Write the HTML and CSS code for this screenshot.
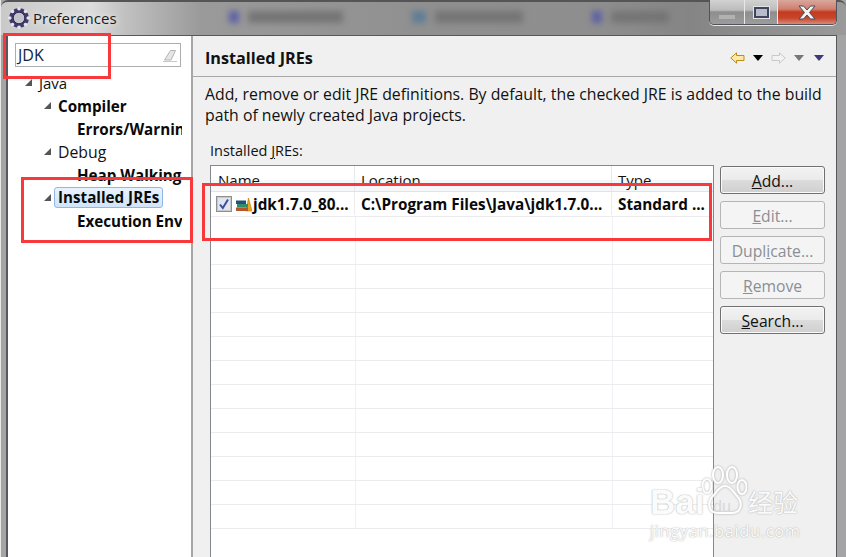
FILE: index.html
```html
<!DOCTYPE html>
<html lang="en">
<head>
<meta charset="utf-8">
<title>Preferences</title>
<link rel="stylesheet" href="styles.css">
</head>
<body>
<div class="window">
  <header class="titlebar">
    <svg class="app-icon" width="24" height="24" viewBox="0 0 24 24">
      <circle cx="12" cy="12" r="10" fill="#3f3a6b"/>
      <g fill="#e4e4ea">
        <circle cx="12" cy="2.800" r="1.800"/><circle cx="12" cy="21.200" r="1.800"/><circle cx="2.800" cy="12" r="1.800"/><circle cx="21.200" cy="12" r="1.800"/>
        <circle cx="5.500" cy="5.500" r="1.800"/><circle cx="18.500" cy="5.500" r="1.800"/><circle cx="5.500" cy="18.500" r="1.800"/><circle cx="18.500" cy="18.500" r="1.800"/>
      </g>
      <circle cx="12" cy="12" r="5.800" fill="#c4c3cc" stroke="#2f2c55" stroke-width="1"/>
    </svg>
    <span class="title-text">Preferences</span>
    <div class="blur-strip">
      <i class="blot blot-blue"></i><i class="blot blot-long"></i>
      <i class="blot blot-teal"></i><i class="blot blot-mid"></i>
      <i class="blot blot-blue blot-far"></i><i class="blot blot-short"></i>
    </div>
    <div class="win-buttons">
      <div class="win-btn btn-min"><span class="min-bar"></span></div>
      <div class="win-btn btn-max"><span class="max-box"></span></div>
      <div class="win-btn btn-close">
        <svg width="18" height="15" viewBox="3 1 18 14"><path d="M4 1.500h4.500L12 5.500l3.500-4H20l-5.500 6.500L20 14.500h-4.500L12 10.500l-3.500 4H4l5.500-6.500z" fill="#f2f2f2" stroke="#4a4a55" stroke-width="1"/></svg>
      </div>
    </div>
  </header>

  <div class="client">
    <aside class="sidebar">
      <div class="search">
        <span>JDK</span>
        <svg width="14" height="14" viewBox="0 0 14 14"><path d="M1.500 12 7.500 2.500h5L8 12z" fill="#e6e6e6" stroke="#b4b4b4"/><path d="M0 13.500h14" stroke="#c8c8c8"/></svg>
      </div>
      <ul class="tree">
        <li class="node lvl0 java"><i class="twist"></i><span>Java</span></li>
        <li class="node lvl1 bold"><i class="twist"></i><span>Compiler</span></li>
        <li class="node lvl2 bold"><span>Errors/Warnings</span></li>
        <li class="node lvl1"><i class="twist"></i><span>Debug</span></li>
        <li class="node lvl2 bold"><span>Heap Walking</span></li>
        <li class="node lvl1 bold"><i class="twist"></i><span class="selected">Installed JREs</span></li>
        <li class="node lvl2 bold"><span>Execution Environments</span></li>
      </ul>
    </aside>

    <main class="content">
      <div class="content-head">
        <h1>Installed JREs</h1>
        <div class="nav">
          <svg width="15" height="12" viewBox="0 0 15 12"><path d="M.8 6 6.500.8v2.700h7.500v5H6.500v2.700z" fill="#fde9a8" stroke="#c08a18"/></svg>
          <i class="tri tri-black"></i>
          <svg class="nav-fwd" width="15" height="12" viewBox="0 0 15 12"><path d="M14.200 6 8.500.8v2.700H1v5h7.500v2.700z" fill="#f2f2f2" stroke="#c8c8c8"/></svg>
          <i class="tri tri-grey"></i>
          <i class="tri tri-navy"></i>
        </div>
      </div>
      <div class="content-body">
        <p class="desc">Add, remove or edit JRE definitions. By default, the checked JRE is added to the build path of newly created Java projects.</p>
        <div class="label">Installed <u>J</u>REs:</div>
        <div class="table-area">
          <div class="table">
            <div class="thead">
              <div class="c1">Name</div><div class="c2">Location</div><div class="c3">Type</div>
            </div>
            <div class="row first">
              <div class="c1 name-cell">
                <span class="check"><svg width="12" height="12" viewBox="0 0 12 12"><path d="M2 6.500 4.800 10 10 1.500" fill="none" stroke="#3c4f9c" stroke-width="2"/></svg></span>
                <svg class="jre-icon" width="16" height="15" viewBox="0 0 16 15">
                  <path d="M12.500 1 16 14h-6z" fill="#e9a820" stroke="#b67a10" stroke-width=".6"/>
                  <rect x="0" y="10.500" width="12" height="3.500" fill="#b5562a"/>
                  <rect x="1" y="7" width="11" height="3.500" fill="#2f8f6a"/>
                  <rect x="0" y="3.500" width="10" height="3.500" fill="#23507e"/>
                </svg>
                <span>jdk1.7.0_80...</span>
              </div>
              <div class="c2">C:\Program Files\Java\jdk1.7.0...</div>
              <div class="c3">Standard ...</div>
            </div>
            <div class="row"></div><div class="row"></div><div class="row"></div><div class="row"></div>
            <div class="row"></div><div class="row"></div><div class="row"></div><div class="row"></div>
            <div class="row"></div><div class="row"></div><div class="row"></div><div class="row"></div><div class="row"></div>
          </div>
          <div class="actions">
            <button class="btn active"><u>A</u>dd...</button>
            <button class="btn" disabled><u>E</u>dit...</button>
            <button class="btn" disabled>Dupl<u>i</u>cate...</button>
            <button class="btn" disabled><u>R</u>emove</button>
            <button class="btn active"><u>S</u>earch...</button>
          </div>
        </div>
      </div>
    </main>
  </div>

  <div class="mark mark-search"></div>
  <div class="mark mark-tree"></div>
  <div class="mark mark-row"></div>

  <div class="watermark">
    <svg class="paw" width="46" height="52" viewBox="0 0 46 52">
      <g fill="none" stroke="#fff" stroke-width="2">
        <ellipse cx="6" cy="20" rx="4.500" ry="7"/><ellipse cx="17" cy="9" rx="5" ry="8"/>
        <ellipse cx="31" cy="9" rx="5" ry="8"/><ellipse cx="41" cy="21" rx="4.500" ry="7"/>
        <path d="M24 20c-6 0-8 6-12 10-6 6-5 17 5 17h14c10 0 11-11 5-17-4-4-6-10-12-10z"/>
      </g>
    </svg>
    <span class="wm-bai">Bai</span>
    <span class="wm-du">du</span>
    <span class="wm-cn">经验</span>
    <span class="wm-url">jingyan.baidu.com</span>
  </div>
</div>
</body>
</html>
```

FILE: styles.css
```css
* { box-sizing: border-box; }
html, body { margin: 0; padding: 0; }
body { width: 846px; height: 557px; overflow: hidden; font-family: "Open Sans", "Noto Sans", sans-serif; color: #111; }

.window {
  position: relative;
  width: 846px;
  height: 557px;
  display: flex;
  flex-direction: column;
  overflow: hidden;
  background: #a4a4a4;
  border-left: 1px solid #e8e8e8;
}

.titlebar {
  flex: none;
  height: 35px;
  display: flex;
  align-items: center;
  padding-left: 6px;
  border-top: 2px solid #555;
  border-radius: 7px 7px 0 0;
  background: linear-gradient(90deg, #c9c9c9 0, #dcdcdc 90px, #c0c0c0 125px, #9a9a9a 200px, #8f8f8f 440px, #8e8e8e 600px, #858585 690px, #9a9a9a 846px);
}
.app-icon { flex: none; margin-top: -1px; }
.title-text { margin-left: 2px; margin-top: -1px; font-size: 15px; color: #1a1a1a; text-shadow: 0 0 6px #fff; }
.blur-strip { flex: 1; display: flex; align-items: center; gap: 9px; padding-left: 112px; filter: blur(3px); margin-top: -4px; }
.blot { display: block; height: 12px; background: #757575; }
.blot-blue { width: 10px; background: #5d5fa5; }
.blot-far { margin-left: 60px; }
.blot-teal { width: 14px; background: #5e7d96; margin-left: 60px; }
.blot-long { width: 95px; }
.blot-mid { width: 88px; }
.blot-short { width: 58px; }

.win-buttons {
  flex: none;
  align-self: flex-start;
  margin: -2px 9px 0 0;
  height: 25px;
  display: flex;
  border: 1px solid #50545a;
  border-top: 0;
  border-radius: 0 0 5px 5px;
  overflow: hidden;
  box-shadow: 0 1px 0 #e6e6e6;
}
.win-btn { height: 24px; display: flex; align-items: center; justify-content: center; }
.btn-min, .btn-max { background: linear-gradient(#d2d2d2 0, #bcbcbc 42%, #8e8e8e 50%, #9c9c9c 100%); border-right: 1px solid #e8e8e8; }
.btn-min { width: 35px; padding-top: 9px; }
.btn-max { width: 33px; }
.btn-close { width: 58px; background: linear-gradient(#d9a79e 0, #cf7f6e 38%, #c23b20 50%, #c8452a 75%, #d98a78 100%); }
.min-bar { width: 16px; height: 4px; background: #b2b2b2; }
.max-box { width: 15px; height: 11px; border: 2px solid #3f4560; background: #b8bcc8; box-shadow: 0 0 0 1px #e4e4e4; }

.client {
  flex: 1;
  min-height: 0;
  display: flex;
  margin: 0 9px 0 5px;
  border: 1px solid #55585c;
  border-width: 1px 1px 0 2px;
  background: #fff;
}

.sidebar {
  flex: none;
  width: 185px;
  background: #fff;
  border-right: 2px solid #a6a6a6;
  padding: 7px 10px 0 7px;
  overflow: hidden;
}
.search {
  height: 24px;
  border: 1px solid #adadad;
  display: flex;
  align-items: center;
  justify-content: space-between;
  padding: 0 3px 0 2px;
  font-size: 16px;
  color: #10243e;
}
.tree { list-style: none; margin: 5px 0 0; padding: 0; width: 167px; overflow: hidden; }
.node { height: 23.100px; display: flex; align-items: center; white-space: nowrap; font-size: 15.800px; color: #111; }
.node.bold { font-size: 15.200px; font-weight: 700; color: #0a0a0a; }
.lvl0 { padding-left: 10px; }
.lvl1 { padding-left: 29px; }
.lvl2 { padding-left: 62px; }
.node.java { height: 21px; margin-bottom: 1px; font-size: 15px; }
.twist { flex: none; width: 0; height: 0; margin-right: 7px; border-style: solid; border-width: 0 0 7px 7px; border-color: transparent transparent #555 transparent; }
.selected { margin-left: -4px; padding: 0 3px; height: 21px; line-height: 19px; background: linear-gradient(#e9f3fd, #cfe4fb); border: 1px solid #8fb8e6; border-radius: 3px; }

.content { flex: 1; min-width: 0; background: #f0f0f0; display: flex; flex-direction: column; }
.content-head { flex: none; height: 41px; display: flex; align-items: center; justify-content: space-between; padding: 3px 12px 0 12px; border-bottom: 1px solid #a8a8a8; }
.content-head h1 { margin: 0; font-size: 16.200px; font-weight: 700; color: #111; }
.nav { display: flex; align-items: center; }
.nav-fwd { margin-left: 8px; }
.tri { display: block; width: 10px; height: 6px; margin-left: 8px; border-style: solid; border-width: 6px 5px 0 5px; border-color: transparent; }
.tri-black { border-top-color: #000; }
.tri-grey { border-top-color: #777; }
.tri-navy { border-top-color: #3c3a78; margin-left: 10px; }

.content-body { flex: 1; min-height: 0; display: flex; flex-direction: column; padding: 7px 11px 0 12px; }
.desc { margin: 0; font-size: 15.820px; line-height: 21px; width: 625px; color: #111; }
.label { margin: 15px 0 0 5px; font-size: 14.500px; line-height: 20px; color: #111; }
.label u { text-underline-offset: 2px; }

.table-area { flex: 1; min-height: 0; display: flex; gap: 6px; margin: 4px 0 0 5px; }
.table { flex: none; width: 504px; background: #fff; border: 1px solid #828790; border-bottom: 0; overflow: hidden; }
.thead { height: 26px; display: flex; background: linear-gradient(#fff 0, #fff 55%, #f6f7f8 55%, #f6f7f8 100%); border-bottom: 1px solid #e2e3e5; font-size: 15px; line-height: 29px; }
.thead > div { padding-left: 7px; border-right: 1px solid #e6e8ec; color: #111; }
.thead > .c2, .thead > .c3 { padding-left: 6px; }
.thead > .c3 { border-right: 0; }
.c1 { flex: none; width: 144px; }
.c2 { flex: none; width: 257px; }
.c3 { flex: none; width: 101px; }
.row { height: 24px; display: flex; border-bottom: 1px solid #ececef; font-size: 15.300px; font-weight: 700; line-height: 24px; white-space: nowrap; color: #0a0a0a; }
.row > div { height: 23px; }
.row.first { height: 25px; }
.row > .c1 { display: flex; align-items: center; padding: 1px 0 0 5px; }
.row > .c2, .row > .c3 { padding-left: 6px; }
.row > .c1, .row > .c2 { border-right: 1px solid #ececef; }
.row:not(.first) { background: linear-gradient(90deg, transparent 144px, #eef0f5 144px, #eef0f5 145px, transparent 145px, transparent 401px, #eef0f5 401px, #eef0f5 402px, transparent 402px); }
.check { flex: none; width: 16px; height: 16px; display: flex; align-items: center; justify-content: center; border: 1px solid #8e8f8f; background: #e1e5f0; box-shadow: inset 0 0 0 1px #c9c9c9; }
.jre-icon { flex: none; margin-left: 4px; margin-right: 1px; }

.actions { flex: none; width: 105px; display: flex; flex-direction: column; gap: 7px; margin-top: 1px; }
.btn { height: 28px; padding: 2px 0 0; font: 15.700px "Open Sans", "Noto Sans", sans-serif; border-radius: 3px; border: 1px solid #707070; color: #111; background: linear-gradient(#f2f2f2 0, #ebebeb 49%, #dcdcdc 50%, #cfcfcf 100%); box-shadow: inset 0 0 0 1px #fafafa; }
.btn:disabled { color: #8a8f96; background: #f4f4f4; border-color: #b5b5b5; box-shadow: none; }

.mark { position: absolute; border: 3px solid #f8383a; pointer-events: none; }
.mark-search { left: 2px; top: 33px; width: 108px; height: 46px; }
.mark-tree { left: 20px; top: 177px; width: 172px; height: 66px; }
.mark-row { left: 201px; top: 183px; width: 510px; height: 58px; }

.watermark { position: absolute; left: 647px; top: 466px; width: 190px; height: 91px; color: #fff; pointer-events: none; font-family: "Liberation Sans", sans-serif; }
.paw { position: absolute; left: 53px; top: 0; filter: drop-shadow(0 0 1px #aaa); }
.wm-bai { position: absolute; left: 2px; top: 20px; font-size: 35px; line-height: 32px; font-weight: 700; color: #fbfbfb; text-shadow: 0 0 1.500px #999; }
.wm-du { position: absolute; left: 65px; top: 33px; font-size: 16px; line-height: 16px; color: #d8d8d8; }
.wm-cn { position: absolute; left: 100px; top: 19px; font-family: "Noto Sans CJK SC", sans-serif; font-size: 25px; line-height: 32px; color: #fbfbfb; text-shadow: 0 0 1.500px #999; }
.wm-url { position: absolute; left: 2px; top: 55px; font-family: "Open Sans", sans-serif; font-size: 16.500px; line-height: 20px; letter-spacing: .6px; color: #fbfbfb; text-shadow: 0 0 1.500px #999; white-space: nowrap; }
```
